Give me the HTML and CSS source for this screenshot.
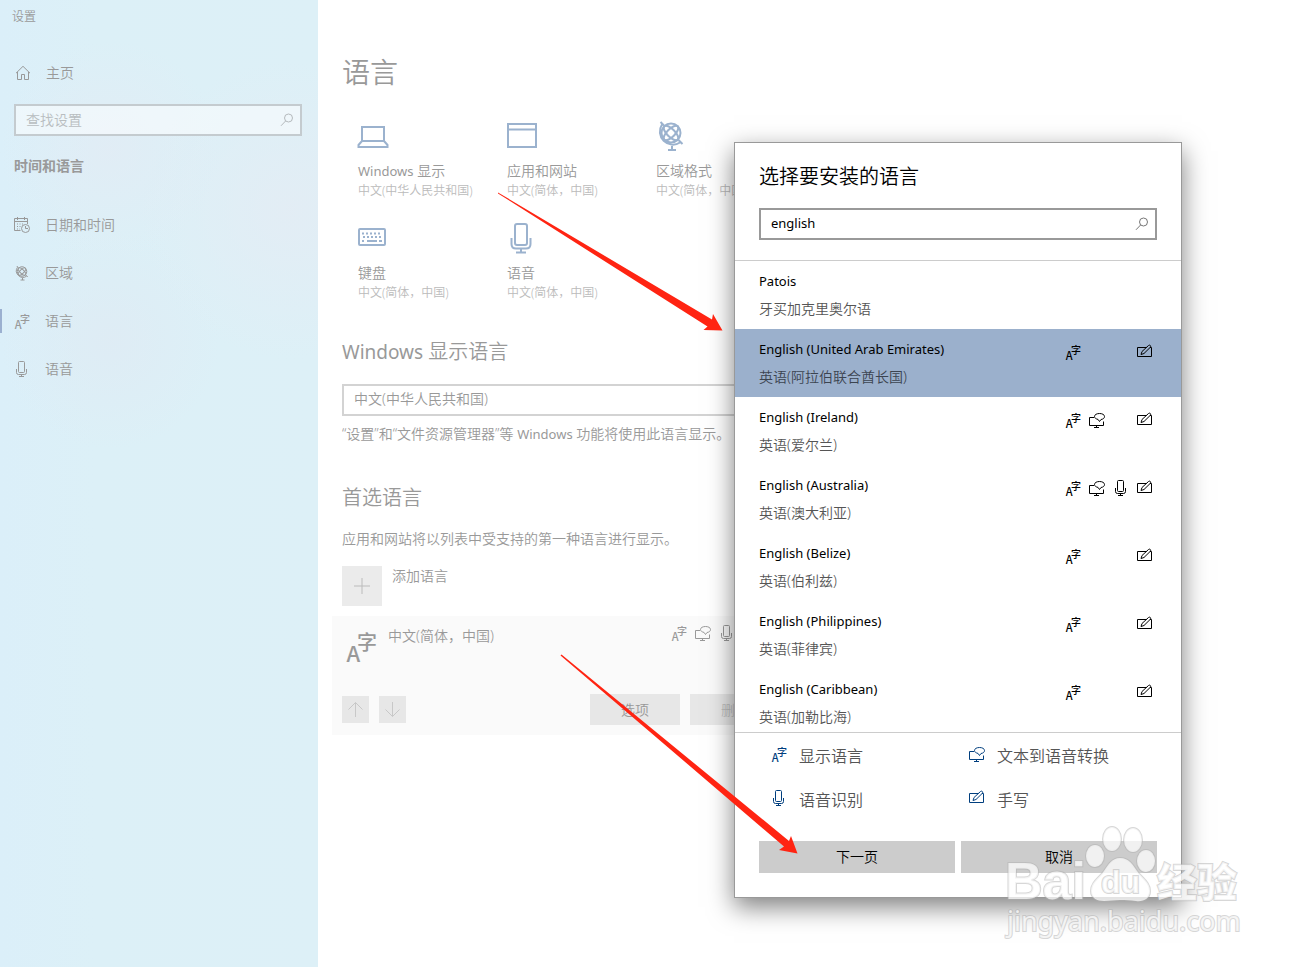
FILE: index.html
```html
<!DOCTYPE html>
<html lang="zh-CN">
<head>
<meta charset="utf-8">
<title>设置</title>
<link rel="stylesheet" href="styles.css">
</head>
<body>
<svg class="sprite" aria-hidden="true">
  <symbol id="i-tts" viewBox="0 0 16 16">
    <path d="M5 5.500H.5v8h14V9.500M7.500 13.500v2M5 15.500h5"/>
    <path d="M10.500 1.500c2.800 0 5 1.200 5 3s-1.500 2.700-3.500 3L10.500 9.500 9 7.400C7 7 5.500 6 5.500 4.500c0-1.800 2.200-3 5-3z"/>
  </symbol>
  <symbol id="i-mic" viewBox="0 0 16 16">
    <rect x="4.500" y=".5" width="6" height="11" rx="1"/>
    <path d="M2.500 8v3.500q0 2 2 2h6q2 0 2-2V8M7.500 13.500v2M5 15.500h5"/>
  </symbol>
  <symbol id="i-pen" viewBox="0 0 16 16">
    <path d="M9.500 3.500h-9v9h14v-9H13"/>
    <path d="M4 10.500l1-3 6.500-6q1-.8 1.800 0t0 1.800L7 9.500z"/>
  </symbol>
  <symbol id="i-search" viewBox="0 0 14 14">
    <circle cx="8.500" cy="5" r="4"/><path d="M5.700 7.900L1 12.800"/>
  </symbol>
  <symbol id="i-home" viewBox="0 0 16 16">
    <path d="M1 8.200L8 1.300l7 6.900M2.500 7v7.500h4v-5h3v5h4V7"/>
  </symbol>
  <symbol id="i-date" viewBox="0 0 16 16">
    <path d="M6.500 13.500H.5v-12h13V7M.5 4.500h13M3.500 0v3M10.500 0v3"/>
    <path stroke-dasharray="1 1.500" d="M3 7h7M3 9.500h5M3 12h3"/>
    <circle cx="11.500" cy="11.500" r="4"/><path d="M11.500 9v2.500H14"/>
  </symbol>
  <symbol id="i-globe" viewBox="0 0 32 32">
    <circle cx="16" cy="13" r="9.500"/>
    <ellipse cx="16" cy="13" rx="9.500" ry="4" transform="rotate(45 16 13)"/>
    <ellipse cx="16" cy="13" rx="9.500" ry="4" transform="rotate(-45 16 13)"/>
    <path d="M5.500 2l3.500 3.500M7 4.500A13 13 0 0 0 25 22.500M23.500 20l4 4M17 26v4M13 30h8"/>
  </symbol>
  <symbol id="i-laptop" viewBox="0 0 32 32">
    <path d="M5 7h22v14H5zM5 21l-3.500 4v2h29v-2L27 21"/>
  </symbol>
  <symbol id="i-window" viewBox="0 0 32 32">
    <path d="M2 4h28v23H2zM2 9.500h28"/>
  </symbol>
  <symbol id="i-keyboard" viewBox="0 0 32 32">
    <rect x="2" y="7" width="26" height="16" rx="1"/>
    <path stroke-dasharray="2 2" d="M5 11.500h20M6 15h20M5 19h3"/><path d="M10 19h10M22 19h3"/>
  </symbol>
  <symbol id="i-bigmic" viewBox="0 0 32 32">
    <rect x="9" y="2" width="12" height="21" rx="2"/>
    <path d="M5.500 16v6q0 4.500 4.500 4.500h10q4.500 0 4.500-4.500v-6M15 26.500V30M10 30.500h10"/>
  </symbol>
  <symbol id="i-up" viewBox="0 0 27 27"><path d="M13.500 21V6.500M6.500 13.500l7-7 7 7"/></symbol>
  <symbol id="i-down" viewBox="0 0 27 27"><path d="M13.500 6v14.500M6.500 13.500l7 7 7-7"/></symbol>
  <symbol id="i-plus" viewBox="0 0 16 16"><path d="M8 0v16M0 8h16"/></symbol>
</svg>

<div class="app">
  <aside class="sidebar">
    <div class="app-title">设置</div>
    <a class="nav-item home" href="#"><svg class="icon"><use href="#i-home"/></svg><span>主页</span></a>
    <div class="search side-search">
      <input type="text" placeholder="查找设置" aria-label="查找设置">
      <svg class="search-icon"><use href="#i-search"/></svg>
    </div>
    <h2 class="side-heading">时间和语言</h2>
    <nav>
      <a class="nav-item" href="#"><svg class="icon"><use href="#i-date"/></svg><span>日期和时间</span></a>
      <a class="nav-item" href="#"><svg class="icon thick"><use href="#i-globe"/></svg><span>区域</span></a>
      <a class="nav-item current" href="#"><svg class="icon lang" viewBox="0 0 64 64"><text x="3" y="64" font-size="44">A</text><text x="24" y="40" font-size="40">字</text></svg><span>语言</span></a>
      <a class="nav-item" href="#"><svg class="icon"><use href="#i-mic"/></svg><span>语音</span></a>
    </nav>
  </aside>

  <main class="content">
    <h1>语言</h1>
    <div class="tiles">
      <a class="tile" href="#"><svg><use href="#i-laptop"/></svg><b><span class="latin">Windows</span> 显示</b><small>中文(中华人民共和国)</small></a>
      <a class="tile" href="#"><svg><use href="#i-window"/></svg><b>应用和网站</b><small>中文(简体，中国)</small></a>
      <a class="tile" href="#"><svg><use href="#i-globe"/></svg><b>区域格式</b><small>中文(简体，中国)</small></a>
      <a class="tile" href="#"><svg><use href="#i-keyboard"/></svg><b>键盘</b><small>中文(简体，中国)</small></a>
      <a class="tile" href="#"><svg><use href="#i-bigmic"/></svg><b>语音</b><small>中文(简体，中国)</small></a>
    </div>

    <h2><label for="display-language"><span class="latin-large">Windows</span> 显示语言</label></h2>
    <select id="display-language" class="display-select"><option>中文(中华人民共和国)</option></select>
    <p class="note">“设置”和“文件资源管理器”等 <span class="latin">Windows</span> 功能将使用此语言显示。</p>

    <h2 class="preferred">首选语言</h2>
    <p class="intro">应用和网站将以列表中受支持的第一种语言进行显示。</p>
    <button class="add" type="button"><span class="add-box"><svg class="icon"><use href="#i-plus"/></svg></span><span>添加语言</span></button>

    <section class="card">
      <div class="card-top">
        <svg class="card-icon lang" viewBox="0 0 64 64"><text x="3" y="64" font-size="44">A</text><text x="24" y="40" font-size="40">字</text></svg>
        <span class="card-name">中文(简体，中国)</span>
        <span class="features">
          <svg class="icon f1 lang" viewBox="0 0 64 64"><text x="3" y="64" font-size="44">A</text><text x="24" y="40" font-size="40">字</text></svg>
          <svg class="icon f2"><use href="#i-tts"/></svg>
          <svg class="icon f3"><use href="#i-mic"/></svg>
        </span>
      </div>
      <div class="card-actions">
        <button class="move" type="button" aria-label="上移"><svg><use href="#i-up"/></svg></button>
        <button class="move" type="button" aria-label="下移"><svg><use href="#i-down"/></svg></button>
        <button class="action first" type="button">选项</button>
        <button class="action faint" type="button">删除</button>
      </div>
    </section>
  </main>
</div>

<div class="dialog" role="dialog" aria-labelledby="dialog-title">
  <header class="dialog-head">
    <h2 id="dialog-title">选择要安装的语言</h2>
    <div class="search">
      <input class="latin" type="text" value="english" aria-label="搜索语言">
      <svg class="search-icon"><use href="#i-search"/></svg>
    </div>
  </header>
  <ul class="languages">
    <li><div class="names"><span class="latin">Patois</span><small>牙买加克里奥尔语</small></div></li>
    <li class="selected"><div class="names"><span class="latin">English (United Arab Emirates)</span><small>英语(阿拉伯联合酋长国)</small></div>
      <span class="features"><svg class="icon f1 lang" viewBox="0 0 64 64"><text x="3" y="64" font-size="44">A</text><text x="24" y="40" font-size="40">字</text></svg><svg class="icon f4"><use href="#i-pen"/></svg></span></li>
    <li><div class="names"><span class="latin">English (Ireland)</span><small>英语(爱尔兰)</small></div>
      <span class="features"><svg class="icon f1 lang" viewBox="0 0 64 64"><text x="3" y="64" font-size="44">A</text><text x="24" y="40" font-size="40">字</text></svg><svg class="icon f2"><use href="#i-tts"/></svg><svg class="icon f4"><use href="#i-pen"/></svg></span></li>
    <li><div class="names"><span class="latin">English (Australia)</span><small>英语(澳大利亚)</small></div>
      <span class="features"><svg class="icon f1 lang" viewBox="0 0 64 64"><text x="3" y="64" font-size="44">A</text><text x="24" y="40" font-size="40">字</text></svg><svg class="icon f2"><use href="#i-tts"/></svg><svg class="icon f3"><use href="#i-mic"/></svg><svg class="icon f4"><use href="#i-pen"/></svg></span></li>
    <li><div class="names"><span class="latin">English (Belize)</span><small>英语(伯利兹)</small></div>
      <span class="features"><svg class="icon f1 lang" viewBox="0 0 64 64"><text x="3" y="64" font-size="44">A</text><text x="24" y="40" font-size="40">字</text></svg><svg class="icon f4"><use href="#i-pen"/></svg></span></li>
    <li><div class="names"><span class="latin">English (Philippines)</span><small>英语(菲律宾)</small></div>
      <span class="features"><svg class="icon f1 lang" viewBox="0 0 64 64"><text x="3" y="64" font-size="44">A</text><text x="24" y="40" font-size="40">字</text></svg><svg class="icon f4"><use href="#i-pen"/></svg></span></li>
    <li><div class="names"><span class="latin">English (Caribbean)</span><small>英语(加勒比海)</small></div>
      <span class="features"><svg class="icon f1 lang" viewBox="0 0 64 64"><text x="3" y="64" font-size="44">A</text><text x="24" y="40" font-size="40">字</text></svg><svg class="icon f4"><use href="#i-pen"/></svg></span></li>
  </ul>
  <div class="legend">
    <div><svg class="icon lang" viewBox="0 0 64 64"><text x="3" y="64" font-size="44">A</text><text x="24" y="40" font-size="40">字</text></svg><span>显示语言</span></div>
    <div><svg class="icon"><use href="#i-tts"/></svg><span>文本到语音转换</span></div>
    <div><svg class="icon"><use href="#i-mic"/></svg><span>语音识别</span></div>
    <div><svg class="icon"><use href="#i-pen"/></svg><span>手写</span></div>
  </div>
  <footer class="dialog-actions">
    <button type="button">下一页</button>
    <button type="button">取消</button>
  </footer>
</div>

<svg class="annotations" width="1312" height="967" viewBox="0 0 1312 967">
  <g fill="#ff2412">
    <path d="M498 192.500L712 319.500L713 314L722.500 330.500L703.500 330L707.500 326.500L498 193.500z"/>
    <path d="M561.500 654.500L789 841L791 836L797.500 853.500L779 850L784 846.500L560.500 655.500z"/>
  </g>
  <g class="watermark">
    <ellipse cx="1095" cy="856" rx="9" ry="11"/>
    <ellipse cx="1112" cy="839" rx="9" ry="12"/>
    <ellipse cx="1133" cy="840" rx="9" ry="12"/>
    <ellipse cx="1146" cy="861" rx="9" ry="11"/>
    <path d="M1120 858c9 0 13 7 17 13 5 7 13 11 13 20 0 8-7 11-14 10-6-1-10-1-16-1s-10 1-16 1c-7 0-13-3-13-10 0-9 8-13 13-20 4-6 8-13 16-13z"/>
    <text class="wm-brand" x="1005" y="899" font-size="52">Bai</text>
    <text class="wm-du" x="1101" y="893" font-size="32">du</text>
    <text class="wm-cn" x="1157" y="897" font-size="40">经验</text>
    <text class="wm-url" x="1007" y="931" font-size="27">jingyan.baidu.com</text>
  </g>
</svg>
</body>
</html>
```
FILE: styles.css
```css
* { box-sizing: border-box; }

body, h1, h2, p, ul { margin: 0; padding: 0; }

body {
  position: relative;
  min-height: 100vh;
  background: #fff;
  color: #999;
  font: 14px/20px "Noto Sans", "Noto Sans CJK SC", sans-serif;
  font-weight: 350;
}

h1, h2, b, small { font-weight: inherit; }
a { color: inherit; text-decoration: none; }
button, input, select { font: inherit; color: inherit; border: 0; border-radius: 0; }
svg { fill: none; stroke: currentColor; flex: none; }
.sprite { position: absolute; width: 0; height: 0; }
.lang { overflow: visible; fill: currentColor; stroke: none; font-family: "Noto Sans CJK SC", sans-serif; font-weight: 500; }
.icon { width: 16px; height: 16px; }
.thick { stroke-width: 2; }
.latin { font-size: 13px; font-weight: 400; }
.latin-large { font-size: 19px; font-weight: 400; }

.app { display: flex; min-height: 100vh; }

/* sidebar */
.sidebar {
  width: 318px;
  flex: none;
  padding-top: 9px;
  background:
    radial-gradient(circle at 110px 150px, rgba(228, 234, 244, .6), transparent 110px),
    radial-gradient(circle at 290px 210px, rgba(228, 236, 244, .8), transparent 150px),
    radial-gradient(circle at 110px 340px, rgba(224, 233, 243, .6), transparent 110px),
    linear-gradient(90deg, #dbeff9, #dcf0f7 30%, #ddf0f7);
}
.app-title { padding-left: 12px; margin-bottom: 24px; font-size: 12px; line-height: 16px; }
.nav-item { display: flex; align-items: center; gap: 15px; height: 48px; padding-left: 14px; }
.home { padding-left: 15px; }
.current { position: relative; }
.current::before { content: ""; position: absolute; left: 0; top: 12px; width: 2px; height: 24px; background: #9bb0d0; }
.side-heading { margin: 20px 0 25px 14px; font-size: 14px; line-height: 20px; font-weight: 600; }

.search { display: flex; align-items: center; height: 32px; border: 2px solid #999; padding: 0 6px 0 10px; color: #000; }
.search input { flex: 1; min-width: 0; height: 28px; padding: 0 0 2px; background: none; outline: 0; }
.search .latin { font-size: 13px; font-weight: 400; }
.search-icon { width: 14px; height: 14px; color: #777; }
.side-search { margin: 7px 16px 0 14px; border-color: #c4cbcf; background: rgba(255, 255, 255, .5); }
.side-search .search-icon { color: #b5babd; }
.side-search input::placeholder { color: #b8bdc0; opacity: 1; }

/* page content */
.content { flex: 1; min-width: 0; padding: 54px 24px 24px; }
h1 { font-size: 28px; line-height: 36px; margin-bottom: 30px; }
.content h2 { font-size: 20px; line-height: 28px; }
.tiles { display: grid; grid-template-columns: repeat(3, 149px); row-gap: 23px; padding-left: 15px; margin-bottom: 37px; }
.tile { display: flex; flex-direction: column; white-space: nowrap; padding-left: 1px; }
.tile svg { width: 32px; height: 32px; margin: 0 0 9px -1px; color: #9bb2ce; stroke-width: 2; }
.tile small { margin-top: 2px; font-size: 12px; line-height: 16px; color: #bbb; }
.display-select {
  display: block;
  appearance: none;
  width: 100%;
  max-width: 448px;
  height: 32px;
  margin: 18px 0 8px;
  padding: 0 10px 2px;
  border: 2px solid #d3d3d3;
  background: #fff;
}
.content .preferred { margin: 40px 0 17px; }
.add { display: flex; gap: 10px; margin-top: 17px; padding: 0; background: none; text-align: left; }
.add-box { display: grid; place-items: center; width: 40px; height: 40px; background: #ebebeb; color: #bbb; }

.card { max-width: 458px; margin: 10px 0 0 -10px; padding: 10px; background: #fafafa; }
.card-top { display: flex; align-items: flex-start; height: 68px; }
.card-icon { width: 32px; height: 32px; margin: 4px 11px 0 3px; }
.card-name { flex: 1; }
.features { display: grid; grid-template-columns: repeat(4, 24px); justify-items: center; }
.f1 { grid-column: 1; }
.f2 { grid-column: 2; }
.f3 { grid-column: 3; }
.f4 { grid-column: 4; }
.card .features { margin-right: 17px; margin-top: -1px; }
.card-actions { display: flex; align-items: center; gap: 10px; }
.move { width: 27px; height: 27px; padding: 0; background: #e7e7e7; color: #c8c8c8; }
.move svg { display: block; width: 27px; height: 27px; }
.action { width: 90px; height: 31px; padding: 0; background: #e7e7e7; }
.action.first { margin-left: auto; }
.action.faint { color: #c0c0c0; }

/* language picker */
.dialog {
  position: absolute;
  top: 142px;
  right: 130px;
  width: 448px;
  border: 1px solid #999;
  background: #fff;
  color: #000;
  box-shadow: 0 9px 24px rgba(0, 0, 0, .5);
}
.dialog-head { padding: 20px 24px 20px; border-bottom: 1px solid #ccc; }
.dialog-head h2 { margin-bottom: 17px; font-size: 20px; line-height: 28px; }
.languages { list-style: none; height: 471px; overflow: hidden; }
.languages li { display: flex; height: 68px; padding: 6px 24px; }
.languages .selected { background: #9bb0cc; }
.names { flex: 1; display: flex; flex-direction: column; line-height: 28px; }
.names small { font-size: 14px; color: #555; }
.selected .names small { color: #3c4450; }
.languages .features { align-content: start; padding-top: 9px; }
.legend {
  display: grid;
  grid-template-columns: 198px 1fr;
  row-gap: 20px;
  padding: 11px 24px 29px 36px;
  border-top: 1px solid #ccc;
  font-size: 16px;
  line-height: 24px;
  color: #555;
}
.legend div { display: flex; gap: 12px; }
.legend .icon { margin-top: 2px; color: #003e7e; }
.dialog-actions { display: grid; grid-template-columns: 1fr 1fr; gap: 6px; padding: 0 24px 24px; }
.dialog-actions button { height: 32px; padding: 0; background: #ccc; }

/* arrows and watermark */
.annotations { position: absolute; top: 0; left: 0; stroke: none; pointer-events: none; }
.watermark { fill: rgba(255, 255, 255, .72); stroke: rgba(175, 175, 175, .5); stroke-width: 2; paint-order: stroke; }
.wm-brand, .wm-du { font-family: "Liberation Sans", sans-serif; font-weight: 700; }
.wm-cn { font-family: "Noto Sans CJK SC", sans-serif; font-weight: 900; }
.wm-url { font-family: "Noto Sans", sans-serif; font-weight: 400; }
```
